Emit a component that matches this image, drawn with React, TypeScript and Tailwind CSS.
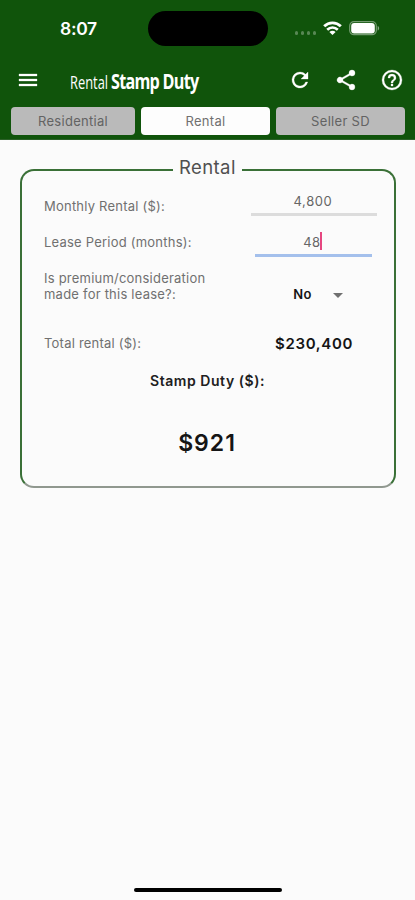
import type { ReactNode } from "react";

function StatusBar() {
  return (
    <div className="flex h-[58px] items-start text-white">
      <div className="w-[148px] pt-[18px] pl-[60px] text-[17.5px] leading-[22px] font-semibold tracking-[-0.3px]">8:07</div>
      <div className="mt-[11px] h-[35px] w-[120px] rounded-full bg-black" />
      <div className="mt-[31px] ml-[27px] flex w-[21px] gap-[2.5px]">
        <i className="size-[3.5px] rounded-full bg-white/30" />
        <i className="size-[3.5px] rounded-full bg-white/30" />
        <i className="size-[3.5px] rounded-full bg-white/30" />
        <i className="size-[3.5px] rounded-full bg-white/30" />
      </div>
      <svg className="mt-[21px] ml-[7px] h-[14px] w-[19px]" viewBox="0 0 19 14" fill="none" stroke="white">
        <path d="M1.2 5.2C5.8 .7 13.2 .7 17.8 5.2" strokeWidth="2.9" />
        <path d="M4.2 8.7C7.3 5.8 11.7 5.8 14.8 8.7" strokeWidth="2.7" />
        <path d="M9.5 14L6.4 11C8.2 9.3 10.8 9.3 12.6 11Z" fill="white" stroke="none" />
      </svg>
      <svg className="mt-[21px] ml-[7px] h-[15px] w-[31px]" viewBox="0 0 31 15" fill="none">
        <rect x=".7" y=".7" width="26.6" height="13" rx="4.2" stroke="white" strokeOpacity=".42" strokeWidth="1.2" />
        <rect x="2.2" y="2" width="23.6" height="10.4" rx="3" fill="white" />
        <path d="M28.7 5V9.5C30.6 8.8 30.6 5.7 28.7 5Z" fill="white" fillOpacity=".5" />
      </svg>
    </div>
  );
}

function Icon({ d }: { d: string }) {
  return (
    <svg className="size-6" viewBox="0 0 24 24" fill="white" stroke="white" strokeWidth=".3">
      <path d={d} />
    </svg>
  );
}

function AppBar() {
  return (
    <div className="flex h-[44px] items-center pl-[15.5px]">
      <Icon d="M3 18h18v-2H3zm0-5h18v-2H3zM3 6v2h18V6z" />
      <h1 className="ml-[30px] flex w-[132px] origin-left scale-x-[0.735] items-baseline pt-[2px] font-['Open_Sans',sans-serif] leading-[28px] whitespace-nowrap text-white">
        <span className="text-[17.5px] font-medium">Rental</span>
        <span className="ml-[4px] text-[22px] font-bold tracking-[-1px]">Stamp Duty</span>
      </h1>
      <div className="ml-[86px] flex gap-[22px]">
        <Icon d="M17.65 6.35A7.96 7.96 0 0 0 12 4a8 8 0 1 0 7.73 10h-2.08A6 6 0 1 1 12 6c1.66 0 3.14.69 4.22 1.78L13 11h7V4z" />
        <Icon d="M18 16.08c-.76 0-1.44.3-1.96.77L8.91 12.7c.05-.23.09-.46.09-.7s-.04-.47-.09-.7l7.05-4.11c.54.5 1.25.81 2.04.81a3 3 0 1 0-3-3c0 .24.04.47.09.7L8.04 9.81A3 3 0 1 0 6 15c.79 0 1.5-.31 2.04-.81l7.12 4.16c-.05.21-.08.43-.08.65A2.92 2.92 0 1 0 18 16.08z" />
        <Icon d="M11 18h2v-2h-2zm1-16a10 10 0 1 0 0 20 10 10 0 0 0 0-20zm0 18a8 8 0 1 1 0-16 8 8 0 0 1 0 16zm0-14a4 4 0 0 0-4 4h2a2 2 0 1 1 4 0c0 2-3 1.75-3 5h2c0-2.25 3-2.5 3-5a4 4 0 0 0-4-4z" />
      </div>
    </div>
  );
}

function Tab({ children, className }: { children: ReactNode; className: string }) {
  return (
    <button className={"h-[28px] rounded-[4px] text-[13px] leading-[20px] tracking-[0.3px] " + className}>{children}</button>
  );
}

function Row({ label, className, children }: { label: ReactNode; className: string; children: ReactNode }) {
  return (
    <div className={"flex justify-between " + className}>
      <div className="text-[13px] leading-[16px] tracking-[0.22px] whitespace-nowrap text-[#707070]">{label}</div>
      {children}
    </div>
  );
}

export default function App() {
  return (
    <div className="flex h-[900px] w-[415px] flex-col bg-[#fbfbfb] font-['Inter',sans-serif]">
      <header className="h-[140px] border-b border-[#2b6128] bg-[#10540b]">
        <StatusBar />
        <AppBar />
        <nav className="mt-[5.4px] flex gap-[6px] pl-[11px]">
          <Tab className="w-[124px] bg-[#bababa] text-[#636363]">Residential</Tab>
          <Tab className="w-[129px] bg-[#fdfdfd] text-[#707070]">Rental</Tab>
          <Tab className="w-[129px] bg-[#bababa] text-[#636363]">Seller SD</Tab>
        </nav>
      </header>

      <main className="px-[20px] pt-[18px]">
        <fieldset className="h-[330px] w-[376px] rounded-[14px] border-2 border-[#3a7037] border-b-[#90988f] pr-[18px] pl-[22px]">
          <legend className="ml-[129px] h-[24px] px-[6px] text-[18.5px] leading-[18px] tracking-[0.4px] text-[#505050]">Rental</legend>
          <Row className="h-[36px] pt-[16px]" label="Monthly Rental ($):">
            <div className="-mt-[8px] -mr-px h-[26px] w-[126px] border-b-[3px] border-[#dcdcdc] pr-[2px] text-center text-[13px] leading-[22px] tracking-[0.6px] text-[#666]">4,800</div>
          </Row>
          <Row className="h-[36px] pt-[16px]" label="Lease Period (months):">
            <div className="mr-[4px] -mt-[2px] flex h-[25px] w-[117px] justify-center border-b-[3px] border-[#a4c0ec] pr-[2px] text-[13px] leading-[20px] tracking-[0.3px] text-[#666]">
              48<i className="h-[18px] w-[1.5px] bg-[#e64680]" />
            </div>
          </Row>
          <Row className="h-[64px] pt-[16px]" label={<>Is premium/consideration<br />made for this lease?:</>}>
            <div className="mt-[17px] mr-[33px] flex h-[16px] items-center gap-[21px] text-[13px] font-semibold tracking-[0.5px] text-[#151515]">
              No
              <svg className="h-[5px] w-[10px]" viewBox="0 0 10 5"><path d="M0 0H10L5 5Z" fill="#707070" /></svg>
            </div>
          </Row>
          <Row className="h-[44px] pt-[17px]" label="Total rental ($):">
            <div className="mr-[23px] text-[15px] leading-[18px] font-semibold tracking-[0.65px] text-[#151515]">$230,400</div>
          </Row>
          <div className="mt-[9px] pr-[5px] text-center text-[14px] leading-[20px] font-semibold tracking-[0.55px] text-[#202020]">Stamp Duty ($):</div>
          <div className="mt-[37px] pr-[6px] text-center text-[23px] leading-[30px] font-semibold tracking-[1px] text-[#151515]">$921</div>
        </fieldset>
      </main>

      <div className="mt-auto mb-[8px] ml-[134px] h-[4px] w-[148px] rounded-full bg-black" />
    </div>
  );
}
